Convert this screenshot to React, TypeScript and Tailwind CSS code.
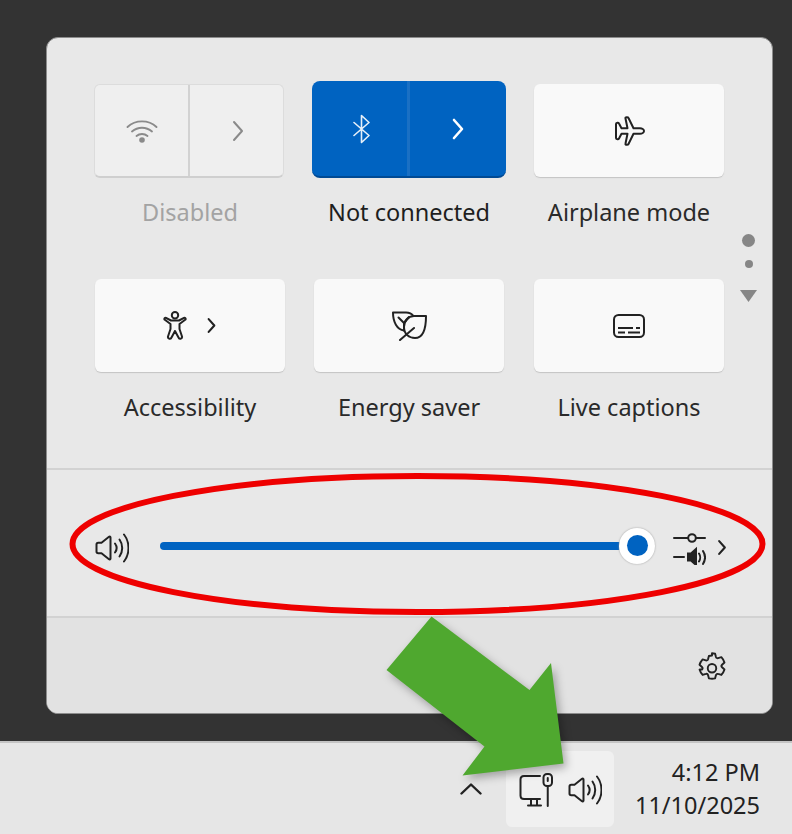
import React from 'react';

type IconProps = { className?: string };

const Chevron = ({ className }: IconProps) => (
  <svg viewBox="0 0 12 24" fill="none" stroke="currentColor" strokeWidth="2" strokeLinecap="round" strokeLinejoin="round" className={className}>
    <path d="M2 3l8 9-8 9" />
  </svg>
);

const Wifi = ({ className }: IconProps) => (
  <svg viewBox="0 0 32 26" fill="none" stroke="currentColor" strokeWidth="1.900" strokeLinecap="round" className={className}>
    <path d="M1.500 9C9.500 1.500 22.500 1.500 30.500 9" />
    <path d="M6 13.500c5.800-5 14.200-5 20 0" />
    <path d="M10.500 18c3.200-2.700 7.800-2.700 11 0" />
    <circle cx="16" cy="22" r="2.800" fill="currentColor" stroke="none" />
  </svg>
);

const Bluetooth = ({ className }: IconProps) => (
  <svg viewBox="0 0 20 30" fill="none" stroke="currentColor" strokeWidth="1.600" strokeLinecap="round" strokeLinejoin="round" className={className}>
    <path d="M2 8.500l15 13-7.500 7V1.500l7.500 7-15 13" />
  </svg>
);

const Plane = ({ className }: IconProps) => (
  <svg viewBox="0 0 30 30" fill="none" stroke="currentColor" strokeWidth="2" strokeLinejoin="round" className={className}>
    <path d="M29 15c0-1.500-2-2.800-4-2.800h-6.500L13.500 2C13 .8 10 .8 10.500 2.500l2 9.700h-6L4 7.500c-.500-1-3-1-3 .5v14c0 1.500 2.500 1.500 3 .5l2.500-4.700h6l-2 9.700c-.500 1.700 2.500 1.700 3 .5l5-10.200H25c2 0 4-1.300 4-2.800z" />
  </svg>
);

const Person = ({ className }: IconProps) => (
  <svg viewBox="0 0 24 29" fill="none" stroke="currentColor" strokeWidth="2" strokeLinejoin="round" className={className}>
    <circle cx="12" cy="4.200" r="3.200" />
    <path d="M1.500 8.500C1 7.500 2 6.300 3 6.800L8 9.500h8l5-2.700c1-.5 2 .7 1.500 1.700L16.500 13v5l2.500 7.500c.5 2.500-3 3-3.500 1L12 20l-3.500 6.500c-.5 2-4 1.500-3.500-1L7.500 18v-5z" />
  </svg>
);

const Leaves = ({ className }: IconProps) => (
  <svg viewBox="0 0 35 30" fill="none" stroke="currentColor" strokeWidth="2" strokeLinecap="round" strokeLinejoin="round" className={className}>
    <path d="M12 19.500C5 18.500 1 11 1 1.500h13c3.500 0 6 1.500 7.500 3.500" />
    <path d="M34 5H22c-6 0-10 5-10 11 0 7 5 11 11 11 7 0 11-8 11-22z" />
    <path d="M6.500 6.500L12 12l5-6M12 12v7.500" />
    <path d="M8 29l14-12" />
  </svg>
);

const Captions = ({ className }: IconProps) => (
  <svg viewBox="0 0 32 24" fill="none" stroke="currentColor" strokeWidth="2" className={className}>
    <rect x="1" y="1" width="30" height="22" rx="4.500" />
    <path d="M5 14h15M23 14h4M5 18.500h7M15 18.500h12" />
  </svg>
);

const Speaker = ({ className }: IconProps) => (
  <svg viewBox="0 0 34 30" fill="none" stroke="currentColor" strokeWidth="2" strokeLinecap="round" strokeLinejoin="round" className={className}>
    <path d="M1.500 11.500c0-1 .7-1.700 1.700-1.700h3.300L14 3.800c.7-.5 1.500 0 1.500.8v20.800c0 .8-.8 1.300-1.500.8l-7.500-6H3.200c-1 0-1.700-.7-1.700-1.700z" />
    <path d="M20 10.500c2 2.700 2 6.300 0 9" />
    <path d="M24.500 6.500c3.600 5 3.600 12 0 17" />
    <path d="M29 1.500c6 7.500 6 19.500 0 27" />
  </svg>
);

const MixerIcon = ({ className }: IconProps) => (
  <svg viewBox="0 0 33 32" fill="none" stroke="currentColor" strokeWidth="2" strokeLinecap="round" className={className}>
    <path d="M1 5h14M23 5h9" />
    <circle cx="19" cy="5" r="3.800" />
    <path d="M1 24h10" />
    <path d="M15 20.500h3l5-4.500v16l-5-4.500h-3z" fill="currentColor" />
    <path d="M26 20.500c1.500 2.200 1.500 5.800 0 8M30 18c2.500 4 2.500 9 0 13" />
  </svg>
);

const Gear = ({ className }: IconProps) => (
  <svg viewBox="0 0 24 24" fill="none" stroke="currentColor" strokeWidth="1.350" strokeLinejoin="round" className={className}>
    <path d="M12 1.300c.8 0 1.500.1 2.200.3l.6 2.300c.2.600.9 1 1.500.8l2.300-.7c1 1.100 1.800 2.300 2.200 3.800l-1.700 1.600c-.5.500-.5 1.300 0 1.800l1.700 1.600c-.4 1.400-1.200 2.700-2.200 3.800l-2.300-.7c-.6-.2-1.300.2-1.500.8l-.6 2.300c-1.400.4-2.900.4-4.400 0l-.6-2.300c-.2-.6-.9-1-1.500-.8l-2.300.7c-1-1.100-1.800-2.400-2.200-3.800L4.900 12.800c.5-.5.500-1.300 0-1.800L3.200 9.400c.4-1.500 1.200-2.700 2.200-3.800l2.300.7c.6.2 1.300-.2 1.500-.8l.6-2.300c.7-.2 1.400-.3 2.200-.3z" transform="translate(0 -.4)" />
    <circle cx="12" cy="11.500" r="3" />
  </svg>
);

const Network = ({ className }: IconProps) => (
  <svg viewBox="0 0 34 34" fill="none" stroke="currentColor" strokeWidth="2" strokeLinecap="round" strokeLinejoin="round" className={className}>
    <path d="M21 3H5C3 3 1.500 4.500 1.500 6.500v16C1.500 24.500 3 26 5 26h16" />
    <path d="M9 32.500h13M12 26v6.500M18 26v6.500" />
    <rect x="24.500" y="1" width="8.500" height="12" rx="3.500" />
    <path d="M28.750 5v3M28.750 13v20" />
  </svg>
);

const Tile = ({ label, className, children }: { label: string; className?: string; children: React.ReactNode }) => (
  <div className={className}>
    <div className="flex h-[93px] items-center justify-center rounded-[6px] bg-[#f9f9f9] text-[#222] shadow-[0_1px_1px_#c4c4c4]">
      {children}
    </div>
    <div className="mt-[18px] h-[34px] text-center text-[23.500px] leading-[34px] text-[#2a2a2a]">{label}</div>
  </div>
);

export default function App() {
  return (
    <div className="relative h-[834px] w-[792px] overflow-hidden bg-[#333333] font-['Noto_Sans',sans-serif]">
      <div className="pl-[46px] pt-[37px]">
        {/* Quick settings flyout */}
        <div className="h-[677px] w-[727px] overflow-hidden rounded-[12px] border border-[#8c8c8c] bg-[#e8e8e8]">
          <div className="flex h-[430px] pl-[47px] pt-[46px]">
            <div className="grid w-[630px] grid-cols-3 content-start gap-x-[30px] gap-y-[50px]">
              <div>
                <div className="flex h-[94px] rounded-[6px] border border-[#dcdcdc] border-b-2 border-b-[#cfcfcf] bg-[#efefef] text-[#8a8a8a]">
                  <div className="flex w-[95px] items-center justify-center border-r-2 border-[#d2d2d2]">
                    <Wifi className="h-[26px] w-[32px]" />
                  </div>
                  <div className="flex flex-1 items-center justify-center pl-[2px]">
                    <Chevron className="h-[24px] w-[12px]" />
                  </div>
                </div>
                <div className="mt-[17px] h-[34px] pl-[2px] text-center text-[23.500px] leading-[34px] text-[#a3a3a3]">Disabled</div>
              </div>

              <div>
                <div className="-mx-[2px] -mt-[3px] flex h-[97px] rounded-[8px] border-b-2 border-[#004a94] bg-[#0063c1] text-white">
                  <div className="flex w-[98px] items-center justify-center border-r-[3px] border-[#1a70c4] pl-[4px]">
                    <Bluetooth className="h-[30px] w-[20px] opacity-90" />
                  </div>
                  <div className="flex flex-1 items-center justify-center">
                    <Chevron className="h-[24px] w-[12px] stroke-[2.600]" />
                  </div>
                </div>
                <div className="mt-[17px] h-[34px] text-center text-[23.500px] leading-[34px] text-[#1e1e1e]">Not connected</div>
              </div>

              <Tile label="Airplane mode">
                <Plane className="ml-[2px] h-[30px] w-[30px]" />
              </Tile>

              <Tile label="Accessibility" className="-mr-px ml-px">
                <div className="flex items-center gap-[19px]">
                  <Person className="h-[29px] w-[24px]" />
                  <Chevron className="h-[17px] w-[11px] stroke-[3]" />
                </div>
              </Tile>

              <Tile label="Energy saver">
                <Leaves className="h-[30px] w-[35px]" />
              </Tile>

              <Tile label="Live captions">
                <Captions className="h-[24px] w-[32px]" />
              </Tile>
            </div>

            <div className="ml-[16px] mt-[150px] flex w-[17px] flex-col items-center">
              <div className="h-[13px] w-[13px] rounded-full bg-[#868686]" />
              <div className="mt-[13px] h-[8px] w-[8px] rounded-full bg-[#868686]" />
              <svg viewBox="0 0 17 12" className="mt-[22px] h-[12px] w-[17px] fill-[#868686]">
                <path d="M0 0h17L8.500 12z" />
              </svg>
            </div>
          </div>

          {/* Volume */}
          <div className="flex h-[150px] items-center border-y-2 border-[#d2d2d2] pl-[48px] pt-[5px]">
            <Speaker className="mt-[4px] h-[30px] w-[34px] text-[#222]" />
            <div className="ml-[31px] h-[8px] w-[465px] rounded-full bg-[#0063c1]" />
            <div className="-ml-[6px] flex h-[36px] w-[36px] items-center justify-center rounded-full bg-white shadow-[0_0_2px_#9a9a9a]">
              <div className="h-[21px] w-[21px] rounded-full bg-[#0063c1]" />
            </div>
            <MixerIcon className="ml-[18px] mt-[6px] h-[32px] w-[33px] text-[#222]" />
            <Chevron className="ml-[11px] mt-[4px] h-[17px] w-[10px] stroke-[3] text-[#222]" />
          </div>

          {/* Footer */}
          <div className="flex h-[95px] justify-end bg-[#e2e2e2] pr-[43px] pt-[34px]">
            <Gear className="h-[34px] w-[34px] text-[#222]" />
          </div>
        </div>
      </div>

      {/* Taskbar */}
      <div className="mt-[27px] flex h-[93px] items-start border-t-2 border-[#c4c4c4] bg-[#e6e6e6] pl-[460px] pr-[32px] pt-[8px]">
        <svg viewBox="0 0 22 12" fill="none" stroke="#222" strokeWidth="2.400" strokeLinecap="round" strokeLinejoin="round" className="mt-[32px] h-[12px] w-[22px]">
          <path d="M1.500 10.500L11 1.500l9.500 9" />
        </svg>
        <div className="ml-[24px] flex h-[76px] w-[108px] items-center gap-[15px] rounded-[6px] bg-[#f0f0f0] pl-[13px] pt-[2px]">
          <Network className="h-[34px] w-[34px] text-[#222]" />
          <Speaker className="h-[30px] w-[34px] text-[#222]" />
        </div>
        <div className="ml-auto pt-[5px] text-right text-[23.500px] leading-[33px] text-[#222]">
          <div>4:12 PM</div>
          <div>11/10/2025</div>
        </div>
      </div>

      {/* Annotation: red ellipse around the volume slider */}
      <svg viewBox="0 0 792 834" fill="none" className="pointer-events-none absolute inset-0 h-[834px] w-[792px]">
        <ellipse cx="417.500" cy="544" rx="345" ry="68" stroke="#ee0000" strokeWidth="6" />
      </svg>

      {/* Annotation: green arrow pointing at the tray icon */}
      <svg viewBox="0 0 792 834" className="pointer-events-none absolute inset-0 h-[834px] w-[792px] drop-shadow-[3px_4px_4px_rgba(0,0,0,0.3)]">
        <path d="M431.500 616.500L529.500 690L551 663L563.500 763.500L462.500 775.500L484.500 746.500L386.500 670z" fill="#4fa82f" />
      </svg>
    </div>
  );
}
